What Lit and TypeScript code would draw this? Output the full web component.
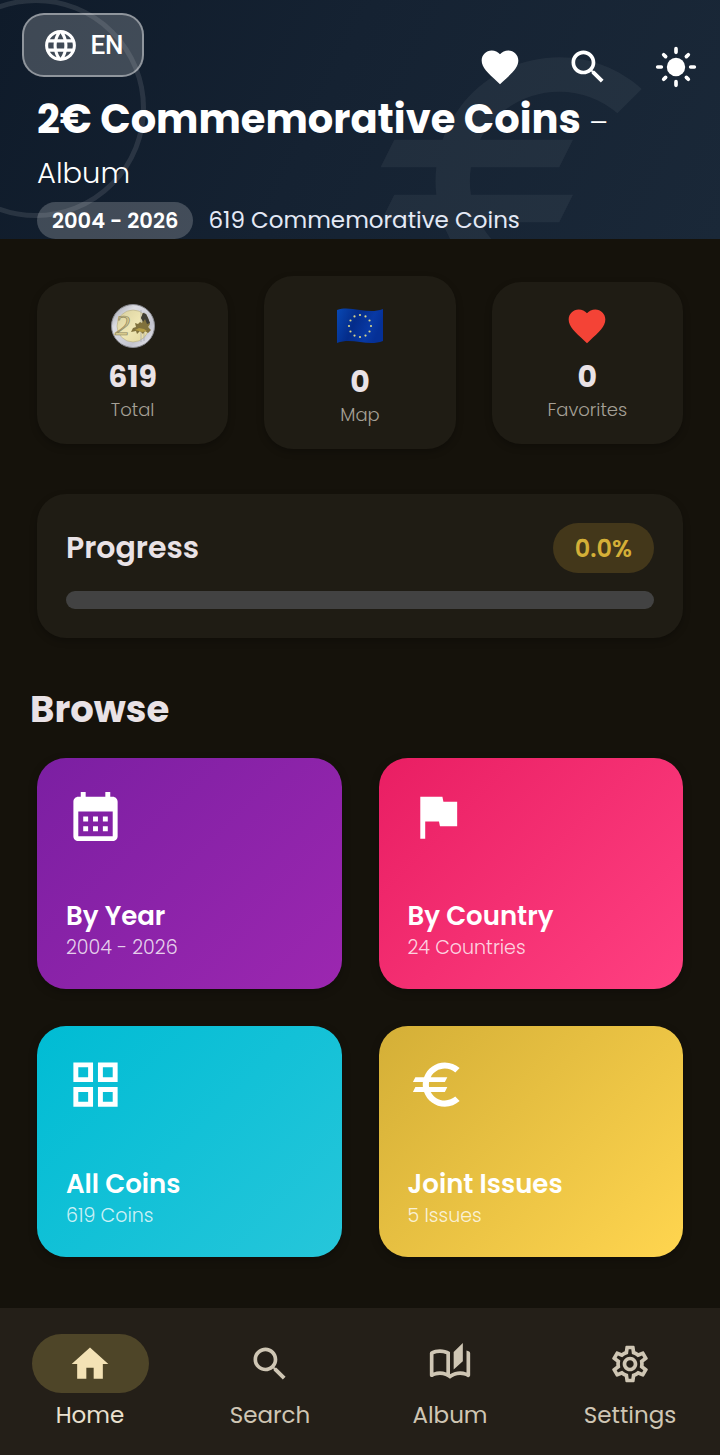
import { LitElement, html, svg, css, SVGTemplateResult, TemplateResult } from "lit";
import { customElement, property, state } from "lit/decorators.js";
import { classMap } from "lit/directives/class-map.js";

const ICONS: Record<string, SVGTemplateResult> = {
  language: svg`<path d="M11.99 2C6.47 2 2 6.48 2 12s4.47 10 9.99 10C17.52 22 22 17.52 22 12S17.52 2 11.99 2zm6.93 6h-2.95c-.32-1.25-.78-2.45-1.38-3.56 1.84.63 3.37 1.91 4.33 3.56zM12 4.04c.83 1.2 1.48 2.53 1.91 3.96h-3.82c.43-1.43 1.08-2.76 1.91-3.96zM4.26 14C4.1 13.36 4 12.69 4 12s.1-1.36.26-2h3.38c-.08.66-.14 1.32-.14 2 0 .68.06 1.34.14 2H4.26zm.82 2h2.95c.32 1.25.78 2.45 1.38 3.56-1.84-.63-3.37-1.9-4.33-3.56zm2.95-8H5.08c.96-1.66 2.49-2.93 4.33-3.56C8.81 5.55 8.35 6.75 8.03 8zM12 19.96c-.83-1.2-1.48-2.53-1.91-3.96h3.82c-.43 1.43-1.08 2.76-1.91 3.96zM14.34 14H9.66c-.09-.66-.16-1.32-.16-2 0-.68.07-1.35.16-2h4.68c.09.65.16 1.32.16 2 0 .68-.07 1.34-.16 2zm.25 5.56c.6-1.11 1.06-2.31 1.38-3.56h2.95c-.96 1.65-2.49 2.93-4.33 3.56zM16.36 14c.08-.66.14-1.32.14-2 0-.68-.06-1.34-.14-2h3.38c.16.64.26 1.31.26 2s-.1 1.36-.26 2h-3.38z"/>`,
  heart: svg`<path d="M12 21.35l-1.45-1.32C5.4 15.36 2 12.28 2 8.5 2 5.42 4.42 3 7.5 3c1.74 0 3.41.81 4.5 2.09C13.09 3.81 14.76 3 16.5 3 19.58 3 22 5.42 22 8.5c0 3.78-3.4 6.86-8.55 11.54L12 21.35z"/>`,
  search: svg`<path d="M15.5 14h-.79l-.28-.27C15.41 12.59 16 11.11 16 9.5 16 5.91 13.09 3 9.5 3S3 5.91 3 9.5 5.91 16 9.5 16c1.61 0 3.09-.59 4.23-1.57l.27.28v.79l5 4.99L20.49 19l-4.99-5zm-6 0C7.01 14 5 11.99 5 9.5S7.01 5 9.5 5 14 7.01 14 9.5 11.99 14 9.5 14z"/>`,
  sun: svg`<circle cx="12" cy="12" r="5"/><path fill="none" stroke="currentColor" stroke-width="2" stroke-linecap="round" d="M2 12h2M20 12h2M12 2v2M12 20v2M5.28 5.28l1.06 1.06M17.66 17.66l1.06 1.06M5.28 18.72l1.06-1.06M17.66 6.34l1.06-1.06"/>`,
  calendar: svg`<path d="M19 4h-1V2h-2v2H8V2H6v2H5c-1.11 0-1.99.9-1.99 2L3 20c0 1.1.89 2 2 2h14c1.1 0 2-.9 2-2V6c0-1.1-.9-2-2-2zm0 16H5V10h14v10zM9 14H7v-2h2v2zm4 0h-2v-2h2v2zm4 0h-2v-2h2v2zm-8 4H7v-2h2v2zm4 0h-2v-2h2v2zm4 0h-2v-2h2v2z"/>`,
  flag: svg`<path d="M14.4 6L14 4H5v17h2v-7h5.6l.4 2h7V6z"/>`,
  grid: svg`<path d="M3 3v8h8V3H3zm6 6H5V5h4v4zm-6 4v8h8v-8H3zm6 6H5v-4h4v4zm4-16v8h8V3h-8zm6 6h-4V5h4v4zm-6 4v8h8v-8h-8zm6 6h-4v-4h4v4z"/>`,
  euro: svg`<path d="M15 18.5c-2.51 0-4.68-1.42-5.76-3.5H15l1-2H8.58c-.05-.33-.08-.66-.08-1s.03-.67.08-1H15l1-2H9.24C10.32 6.92 12.5 5.5 15 5.5c1.61 0 3.09.59 4.23 1.57L21 5.3C19.41 3.87 17.3 3 15 3c-3.92 0-7.24 2.51-8.48 6H3l-1 2h4.06c-.04.33-.06.66-.06 1s.02.67.06 1H3l-1 2h4.52c1.24 3.49 4.56 6 8.48 6 2.31 0 4.41-.87 6-2.3l-1.78-1.77c-1.13.98-2.6 1.57-4.22 1.57z"/>`,
  home: svg`<path d="M10 20v-6h4v6h5v-8h3L12 3 2 12h3v8z"/>`,
  album: svg`<path d="M22.47 5.2c-.47-.24-.96-.44-1.47-.61v12.03c-1.14-.41-2.31-.62-3.5-.62-1.9 0-3.78.54-5.5 1.58V5.48C10.38 4.55 8.51 4 6.5 4c-1.79 0-3.48.44-4.97 1.2C1.2 5.36 1 5.71 1 6.08v12.08c0 .58.47.99 1 .99.16 0 .32-.04.48-.12C3.69 18.4 5.05 18 6.5 18c2.07 0 3.98.82 5.5 2 1.52-1.18 3.43-2 5.5-2 1.45 0 2.81.4 4.02 1.04.16.08.32.12.48.12.52 0 1-.41 1-.99V6.08c0-.37-.2-.72-.53-.88zM10 16.62C8.86 16.21 7.69 16 6.5 16s-2.36.21-3.5.62V6.71C4.11 6.24 5.28 6 6.5 6c1.2 0 2.39.25 3.5.72v9.9zM19 .5l-5 5V15l5-4.5V.5z"/>`,
  settings: svg`<path d="M19.43 12.98c.04-.32.07-.64.07-.98 0-.34-.03-.66-.07-.98l2.11-1.65c.19-.15.24-.42.12-.64l-2-3.46c-.09-.16-.26-.25-.44-.25-.06 0-.12.01-.17.03l-2.49 1c-.52-.4-1.08-.73-1.69-.98l-.38-2.65C14.46 2.18 14.25 2 14 2h-4c-.25 0-.46.18-.49.42l-.38 2.65c-.61.25-1.17.59-1.69.98l-2.49-1c-.06-.02-.12-.03-.18-.03-.17 0-.34.09-.43.25l-2 3.46c-.13.22-.07.49.12.64l2.11 1.65c-.04.32-.07.65-.07.98 0 .33.03.66.07.98l-2.11 1.65c-.19.15-.24.42-.12.64l2 3.46c.09.16.26.25.44.25.06 0 .12-.01.17-.03l2.49-1c.52.4 1.08.73 1.69.98l.38 2.65c.03.24.24.42.49.42h4c.25 0 .46-.18.49-.42l.38-2.65c.61-.25 1.17-.59 1.69-.98l2.49 1c.06.02.12.03.18.03.17 0 .34-.09.43-.25l2-3.46c.12-.22.07-.49-.12-.64l-2.11-1.65zm-1.98-1.71c.04.31.05.52.05.73 0 .21-.02.43-.05.73l-.14 1.13.89.7 1.08.84-.7 1.21-1.27-.51-1.04-.42-.9.68c-.43.32-.84.56-1.25.73l-1.06.43-.16 1.13-.2 1.35h-1.4l-.19-1.35-.16-1.13-1.06-.43c-.43-.18-.83-.41-1.23-.71l-.91-.7-1.06.43-1.27.51-.7-1.21 1.08-.84.89-.7-.14-1.13c-.03-.31-.05-.54-.05-.74s.02-.43.05-.73l.14-1.13-.89-.7-1.08-.84.7-1.21 1.27.51 1.04.42.9-.68c.43-.32.84-.56 1.25-.73l1.06-.43.16-1.13.2-1.35h1.39l.19 1.35.16 1.13 1.06.43c.43.18.83.41 1.23.71l.91.7 1.06-.43 1.27-.51.7 1.21-1.07.85-.89.7.14 1.13zM12 8c-2.21 0-4 1.79-4 4s1.79 4 4 4 4-1.79 4-4-1.79-4-4-4zm0 6c-1.1 0-2-.9-2-2s.9-2 2-2 2 .9 2 2-.9 2-2 2z"/>`,
};

const icon = (name: string, cls: string): TemplateResult =>
  html`<svg class=${cls} viewBox="0 0 24 24" fill="currentColor" aria-hidden="true">${ICONS[name]}</svg>`;

const coin = html`
  <svg class="coin" viewBox="0 0 44 44" aria-hidden="true">
    <defs>
      <linearGradient id="rim" x1="0" y1="0" x2="1" y2="1">
        <stop offset="0" stop-color="#9a9ca4" />
        <stop offset=".3" stop-color="#dcdde3" />
        <stop offset=".7" stop-color="#c3c4cf" />
        <stop offset="1" stop-color="#f2f2f5" />
      </linearGradient>
      <linearGradient id="core" x1="0" y1="0" x2="1" y2="1">
        <stop offset="0" stop-color="#d8cf9e" />
        <stop offset=".5" stop-color="#efe6b4" />
        <stop offset="1" stop-color="#e2d79c" />
      </linearGradient>
    </defs>
    <circle cx="22" cy="22" r="21.5" fill="url(#rim)" stroke="#8a8b92" />
    <circle cx="22" cy="22" r="16" fill="url(#core)" stroke="#b9b28a" stroke-width=".7" />
    <path d="M30 6v32M33 8v29" stroke="#a5a6ad" stroke-width=".7" />
    <path d="M30 14l2-5 3 1 2 4 2 6-2 3 3 3-3 3-3-2-2 3-3-3-3 3-1-3-5 1 2-4 3-1-1-4 3 1 2-2 2 1 1-3z" fill="#80713c" />
    <path d="M30 14l2-5 3 1 2 4 2 5-3 1-2-5-2 3z" fill="#3f3e36" />
    <path d="M24 26l4-2 5 1 3 2-5 1-3-1z" fill="#b39c44" />
    <text x="4" y="31" class="coin-value">2</text>
  </svg>`;

const STARS = Array.from({ length: 12 }, (_, i) => {
  const a = (i * Math.PI) / 6;
  return { x: 23 + 11 * Math.sin(a), y: 18 - 11 * Math.cos(a) };
});

const euFlag = html`
  <svg class="eu" viewBox="0 0 46 36" aria-hidden="true">
    <defs>
      <linearGradient id="cloth" x1="0" y1="0" x2="1" y2="0.3">
        <stop offset="0" stop-color="#0848b4" />
        <stop offset=".45" stop-color="#042c8a" />
        <stop offset=".8" stop-color="#0839a4" />
        <stop offset="1" stop-color="#053096" />
      </linearGradient>
    </defs>
    <path d="M0 2C8-1 15 1 23 2s15 2 23-1v32c-8 3-15 2-23 1S8 32 0 35z" fill="url(#cloth)" />
    ${STARS.map((s) => svg`<circle cx=${s.x} cy=${s.y} r="1.1" fill="#d8d58a" />`)}
  </svg>`;

@customElement("browse-card")
export class BrowseCard extends LitElement {
  static styles = css`
    :host { display: block; }
    .card {
      display: flex;
      flex-direction: column;
      justify-content: space-between;
      box-sizing: border-box;
      min-height: 231px;
      padding: 29px 29px 28px;
      border-radius: 29px;
      color: #fff;
      text-decoration: none;
      box-shadow: 0 3px 8px rgba(0, 0, 0, 0.25);
    }
    .purple { background: linear-gradient(135deg, #7b1fa2, #9c27b0); }
    .pink { background: linear-gradient(135deg, #e91e63, #ff4081); }
    .cyan { background: linear-gradient(135deg, #00bcd4, #26c6da); }
    .gold { background: linear-gradient(135deg, #d4af37, #ffd54f); }
    .glyph { width: 59px; height: 59px; }
    .title { display: block; font-size: 26px; line-height: 36px; font-weight: 600; }
    .note { display: block; font-size: 19px; line-height: 27px; font-weight: 300; color: rgba(255, 255, 255, 0.8); }
  `;
  @property() tone = "purple";
  @property() glyph = "grid";
  @property() heading = "";
  @property() note = "";
  @property() href = "#";

  render() {
    return html`<a class="card ${this.tone}" href=${this.href}>
      ${icon(this.glyph, "glyph")}
      <span><span class="title">${this.heading}</span><span class="note">${this.note}</span></span>
    </a>`;
  }
}

@customElement("app-root")
export class AppRoot extends LitElement {
  static styles = css`
    :host {
      display: flex;
      flex-direction: column;
      min-height: 100vh;
      background: #15120b;
      color: #e9e2e6;
      font-family: Poppins, Inter, "Open Sans", sans-serif;
    }
    button { font: inherit; color: inherit; border: 0; background: none; padding: 0; cursor: pointer; }
    a { color: inherit; text-decoration: none; }
    h1, h2, p { margin: 0; }

    .hero {
      position: relative;
      overflow: hidden;
      background: linear-gradient(115deg, #0f1b2a 0%, #152232 45%, #1a2838 100%);
      color: #fff;
    }
    .watermark { position: absolute; top: 16px; right: 37px; width: 330px; height: 330px; color: rgba(255, 255, 255, 0.05); }
    .ring {
      position: absolute; top: -2px; left: -74px; width: 220px; height: 220px;
      box-sizing: border-box; border: 5px solid rgba(255, 255, 255, 0.1); border-radius: 50%;
    }
    .hero-body { position: relative; padding-top: 13px; }
    .toolbar { display: flex; justify-content: space-between; align-items: flex-start; padding-left: 22px; }
    .lang {
      display: flex; align-items: center; justify-content: center; gap: 11px;
      box-sizing: border-box; width: 122px; height: 64px;
      border: 2px solid rgba(255, 255, 255, 0.42); border-radius: 22px;
      background: rgba(255, 255, 255, 0.2);
      font-family: Roboto, sans-serif; font-size: 26px; font-weight: 500;
    }
    .lang-icon { width: 37px; height: 37px; }
    .actions { display: flex; padding-top: 30px; }
    .action { display: grid; place-items: center; width: 88px; height: 48px; }
    .icon { width: 44px; height: 44px; display: block; }
    .headline { padding: 3px 37px 0; font-size: 40px; line-height: 50px; font-weight: 700; }
    .thin { font-size: 29px; font-weight: 300; }
    .album { display: block; }
    .meta { display: flex; align-items: center; gap: 15px; padding: 4px 37px 0; font-size: 23px; color: #e4e9f5; }
    .years {
      display: flex; align-items: center; height: 37px; padding: 0 15px; border-radius: 19px;
      background: rgba(255, 255, 255, 0.2); color: #fff; font-size: 21px; font-weight: 600;
    }
    .coins { line-height: 37px; }

    .content { flex: 1; padding: 37px 30px 51px; }
    .stats { display: grid; grid-template-columns: repeat(3, 1fr); gap: 36px; align-items: center; margin: 0 7px; }
    .panel { background: #1f1c14; border-radius: 29px; box-shadow: 0 3px 7px rgba(0, 0, 0, 0.25); }
    .stat { display: flex; flex-direction: column; align-items: center; padding: 22px; }
    .picture { display: grid; place-items: center; height: 44px; margin-bottom: 8px; }
    .tall { height: 55px; }
    .coin { width: 44px; height: 44px; }
    .coin-value { font: italic 30px "Liberation Serif", serif; fill: #d6c98c; stroke: #8d8560; stroke-width: 0.7px; }
    .eu { width: 46px; height: 36px; }
    .red { color: #f44336; }
    .count { font-size: 30px; line-height: 42px; font-weight: 700; }
    .caption { font-size: 18px; line-height: 24px; font-weight: 300; color: #a5a096; }

    .progress { margin: 45px 7px 0; padding: 29px; }
    .progress-head { display: flex; align-items: center; justify-content: space-between; margin-bottom: 18px; }
    .progress-label { font-size: 30px; font-weight: 600; }
    .percent {
      display: grid; place-items: center; height: 50px; padding: 0 22px; border-radius: 25px;
      background: #43371a; color: #d4af37; font-size: 24px; font-weight: 600;
    }
    .bar { display: block; width: 100%; height: 18px; appearance: none; border: 0; border-radius: 9px; overflow: hidden; background: #424242; }
    .bar::-webkit-progress-bar { background: #424242; }
    .bar::-webkit-progress-value { background: #d4af37; }

    .section-title { margin: 48px 0 26px; font-size: 37px; line-height: 46px; font-weight: 700; }
    .browse { display: grid; grid-template-columns: 1fr 1fr; gap: 37px; margin: 0 7px; }

    .nav {
      position: sticky; bottom: 0; display: grid; grid-template-columns: repeat(4, 1fr);
      padding: 26px 0 25px; background: #241f18; color: #cfc6b4;
    }
    .tab { display: flex; flex-direction: column; align-items: center; gap: 7px; font-size: 23px; line-height: 30px; }
    .tab-mark { display: grid; place-items: center; width: 117px; height: 59px; border-radius: 30px; }
    .current { color: #eae1cf; }
    .current .tab-mark { background: #4e4528; color: #f3e2b5; }
  `;

  @state() private tab = "Home";

  private stats = [
    { picture: coin, value: 619, label: "Total" },
    { picture: euFlag, value: 0, label: "Map", tall: true },
    { picture: icon("heart", "icon red"), value: 0, label: "Favorites" },
  ];
  private cards = [
    { tone: "purple", glyph: "calendar", heading: "By Year", note: "2004 - 2026" },
    { tone: "pink", glyph: "flag", heading: "By Country", note: "24 Countries" },
    { tone: "cyan", glyph: "grid", heading: "All Coins", note: "619 Coins" },
    { tone: "gold", glyph: "euro", heading: "Joint Issues", note: "5 Issues" },
  ];
  private tabs = [
    { glyph: "home", label: "Home" },
    { glyph: "search", label: "Search" },
    { glyph: "album", label: "Album" },
    { glyph: "settings", label: "Settings" },
  ];

  render() {
    return html`
      <header class="hero">
        ${icon("euro", "watermark")}
        <div class="hero-body">
          <div class="toolbar">
            <button class="lang">${icon("language", "lang-icon")}EN</button>
            <div class="actions">
              <button class="action" aria-label="Favorites">${icon("heart", "icon")}</button>
              <button class="action" aria-label="Search">${icon("search", "icon")}</button>
              <button class="action" aria-label="Light mode">${icon("sun", "icon")}</button>
            </div>
          </div>
          <h1 class="headline">2€ Commemorative Coins <span class="thin">– <span class="album">Album</span></span></h1>
          <div class="meta"><span class="years">2004 - 2026</span><span class="coins">619 Commemorative Coins</span></div>
        </div>
        <div class="ring"></div>
      </header>

      <main class="content">
        <section class="stats">
          ${this.stats.map(
            (s) => html`<button class="panel stat">
              <span class=${classMap({ picture: true, tall: !!s.tall })}>${s.picture}</span>
              <span class="count">${s.value}</span>
              <span class="caption">${s.label}</span>
            </button>`
          )}
        </section>

        <section class="panel progress">
          <div class="progress-head">
            <label class="progress-label" for="collected">Progress</label>
            <span class="percent">0.0%</span>
          </div>
          <progress class="bar" id="collected" value="0" max="619"></progress>
        </section>

        <h2 class="section-title">Browse</h2>
        <section class="browse">
          ${this.cards.map(
            (c) => html`<browse-card tone=${c.tone} glyph=${c.glyph} heading=${c.heading} note=${c.note}></browse-card>`
          )}
        </section>
      </main>

      <nav class="nav">
        ${this.tabs.map(
          (t) => html`<a
            href="#${t.label.toLowerCase()}"
            class=${classMap({ tab: true, current: t.label === this.tab })}
            @click=${() => (this.tab = t.label)}
          >
            <span class="tab-mark">${icon(t.glyph, "icon")}</span>${t.label}
          </a>`
        )}
      </nav>
    `;
  }
}
